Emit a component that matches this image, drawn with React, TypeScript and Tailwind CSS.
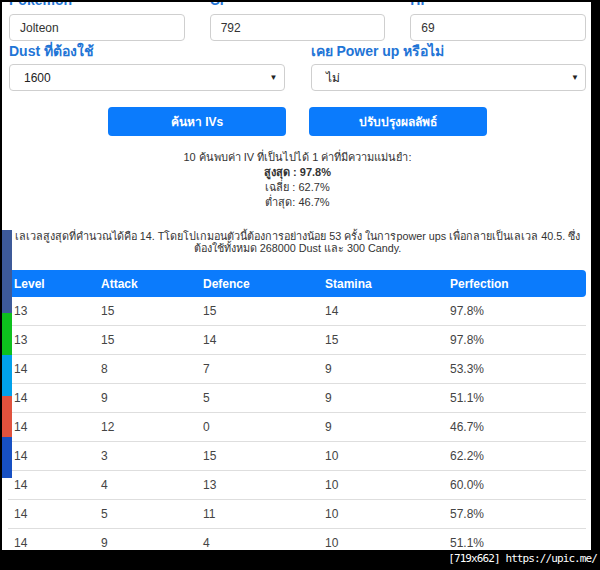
import React from "react";

const rows: [number, number, number, number, string][] = [
  [13, 15, 15, 14, "97.8%"],
  [13, 15, 14, 15, "97.8%"],
  [14, 8, 7, 9, "53.3%"],
  [14, 9, 5, 9, "51.1%"],
  [14, 12, 0, 9, "46.7%"],
  [14, 3, 15, 10, "62.2%"],
  [14, 4, 13, 10, "60.0%"],
  [14, 5, 11, 10, "57.8%"],
  [14, 9, 4, 10, "51.1%"],
];

const shareBars = [
  "h-[83px] bg-[#3d5a99]",
  "h-[42px] bg-[#0dc01d]",
  "h-[41px] bg-[#00a0ea]",
  "h-[41px] bg-[#e0523d]",
  "h-[41px] bg-[#1750c3]",
];

function Label({ children }: { children: React.ReactNode }) {
  return (
    <div className="h-[20px] leading-[20px] text-[14px] font-bold text-[#1f75d6] whitespace-nowrap">
      {children}
    </div>
  );
}

function TextInput({ value }: { value: string }) {
  return (
    <div className="mt-[4px] h-[27px] border border-[#cfcfcf] rounded-[4px] px-[10px] flex items-center text-[12px] text-[#333]">
      {value}
    </div>
  );
}

function FakeSelect({ value }: { value: string }) {
  return (
    <div className="mt-[3px] h-[27px] border border-[#cfcfcf] rounded-[4px] pl-[14px] pr-[6px] flex items-center justify-between text-[12px] text-[#222] bg-white">
      <span>{value}</span>
      <span className="text-[8px] text-[#222]">▼</span>
    </div>
  );
}

export default function App() {
  return (
    <div
      className="relative w-[600px] h-[570px] bg-black overflow-hidden"
      style={{ fontFamily: '"Liberation Sans", "Noto Sans", sans-serif' }}
    >
      <div className="ml-[2px] mt-[2px] w-[589px] h-[548px] bg-white overflow-hidden pl-[7px] pr-[5px]">
        <div className="-mt-[12px]">
          <div className="grid grid-cols-3 gap-x-[25px]">
            <div>
              <Label>Pokemon</Label>
              <TextInput value="Jolteon" />
            </div>
            <div>
              <Label>CP</Label>
              <TextInput value="792" />
            </div>
            <div>
              <Label>HP</Label>
              <TextInput value="69" />
            </div>
          </div>

          <div className="grid grid-cols-2 gap-x-[26px]">
            <div>
              <Label>Dust ที่ต้องใช้</Label>
              <FakeSelect value="1600" />
            </div>
            <div>
              <Label>เคย Power up หรือไม่</Label>
              <FakeSelect value="ไม่" />
            </div>
          </div>

          <div className="mt-[16px] flex justify-center gap-[23px]">
            <button className="w-[178px] h-[29px] rounded-[4px] bg-[#0b7bfc] text-white text-[12px] font-bold">
              ค้นหา IVs
            </button>
            <button className="w-[178px] h-[29px] rounded-[4px] bg-[#0b7bfc] text-white text-[12px] font-bold">
              ปรับปรุงผลลัพธ์
            </button>
          </div>

          <div className="mt-[14px] text-center text-[11px] leading-[15px] text-[#333]">
            <div>10 ค้นพบค่า IV ที่เป็นไปได้ 1 ค่าที่มีความแม่นยำ:</div>
            <div className="font-bold">สูงสุด : 97.8%</div>
            <div>เฉลี่ย : 62.7%</div>
            <div>ต่ำสุด: 46.7%</div>
          </div>

          <div className="mt-[20px] flex flex-col items-center text-[10.8px] leading-[12px] text-[#333] whitespace-nowrap">
            <div>
              เลเวลสูงสุดที่คำนวณได้คือ 14. Tโดยโปเกมอนตัวนี้ต้องการอย่างน้อย 53 ครั้ง ในการpower ups เพื่อกลายเป็นเลเวล 40.5. ซึ่ง
            </div>
            <div>ต้องใช้ทั้งหมด 268000 Dust และ 300 Candy.</div>
          </div>

          <div className="mt-[16px] -ml-[1px]">
            <div className="h-[27px] rounded-[4px] bg-[#0b7bfc] grid grid-cols-[87px_102px_122px_125px_1fr] items-center text-white text-[12px] font-bold">
              <div className="pl-[6px]">Level</div>
              <div className="pl-[6px]">Attack</div>
              <div className="pl-[6px]">Defence</div>
              <div className="pl-[6px]">Stamina</div>
              <div className="pl-[6px]">Perfection</div>
            </div>
            {rows.map((r, i) => (
              <div
                key={i}
                className="h-[29px] border-b border-[#dedede] grid grid-cols-[87px_102px_122px_125px_1fr] items-center text-[12px] text-[#444]"
              >
                {r.map((c, j) => (
                  <div key={j} className="pl-[6px]">
                    {c}
                  </div>
                ))}
              </div>
            ))}
          </div>
        </div>
      </div>

      <div className="absolute left-[2px] top-[230px] w-[10px] flex flex-col">
        {shareBars.map((cls, i) => (
          <div key={i} className={cls} />
        ))}
      </div>

      <div
        className="absolute right-[3px] bottom-[2px] h-[18px] leading-[18px] text-white text-[11px] tracking-[-0.9px] whitespace-nowrap"
        style={{ fontFamily: '"DejaVu Sans Mono", monospace' }}
      >
        [719x662] https://upic.me/
      </div>
    </div>
  );
}
